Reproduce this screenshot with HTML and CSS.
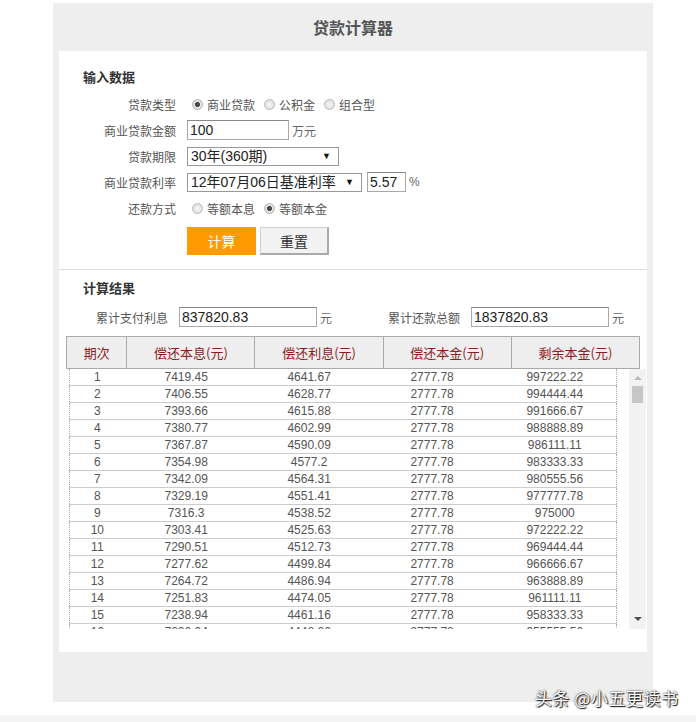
FILE: index.html
```html
<!DOCTYPE html>
<html lang="zh-CN">
<head>
  <meta charset="UTF-8" />
  <meta name="viewport" content="width=device-width, initial-scale=1.0"/>
  <title>贷款计算器</title>
  <link rel="stylesheet" href="styles.css">
</head>
<body>

<div class="page">
  <div class="calc">
    <h2 class="calc-title">贷款计算器</h2>
    <div class="calc-body">

      <div class="input-section">
        <h3 class="section-title">输入数据</h3>

        <div class="form-row">
          <span class="form-label">贷款类型</span>
          <div class="form-field">
            <span class="radio checked"></span><span class="radio-text">商业贷款</span>
            <span class="radio"></span><span class="radio-text">公积金</span>
            <span class="radio"></span><span class="radio-text">组合型</span>
          </div>
        </div>

        <div class="form-row">
          <span class="form-label">商业贷款金额</span>
          <div class="form-field">
            <span class="text-box amount">100</span>
            <span class="unit">万元</span>
          </div>
        </div>

        <div class="form-row">
          <span class="form-label">贷款期限</span>
          <div class="form-field">
            <span class="select-box term">30年(360期)<span class="arrow">▼</span></span>
          </div>
        </div>

        <div class="form-row">
          <span class="form-label">商业贷款利率</span>
          <div class="form-field">
            <span class="select-box rate">12年07月06日基准利率<span class="arrow">▼</span></span>
            <span class="text-box rate-value">5.57</span>
            <span class="unit">%</span>
          </div>
        </div>

        <div class="form-row">
          <span class="form-label">还款方式</span>
          <div class="form-field">
            <span class="radio"></span><span class="radio-text">等额本息</span>
            <span class="radio checked"></span><span class="radio-text">等额本金</span>
          </div>
        </div>

        <div class="button-row">
          <button class="btn-calc">计算</button>
          <button class="btn-reset">重置</button>
        </div>
      </div>

      <div class="result-section">
        <h3 class="section-title">计算结果</h3>

        <div class="summary-row">
          <span class="summary-label">累计支付利息</span>
          <span class="text-box summary-value">837820.83</span>
          <span class="unit">元</span>
          <span class="summary-label second">累计还款总额</span>
          <span class="text-box summary-value">1837820.83</span>
          <span class="unit">元</span>
        </div>

        <table class="plan-head">
          <tr>
            <th class="col-no">期次</th>
            <th>偿还本息(元)</th>
            <th>偿还利息(元)</th>
            <th>偿还本金(元)</th>
            <th>剩余本金(元)</th>
          </tr>
        </table>

        <!-- 只显示前面几期，其余在滚动区里 -->
        <div class="plan-scroll">
          <table class="plan-body">
            <tr><td class="col-no">1</td><td>7419.45</td><td>4641.67</td><td>2777.78</td><td>997222.22</td></tr>
            <tr><td class="col-no">2</td><td>7406.55</td><td>4628.77</td><td>2777.78</td><td>994444.44</td></tr>
            <tr><td class="col-no">3</td><td>7393.66</td><td>4615.88</td><td>2777.78</td><td>991666.67</td></tr>
            <tr><td class="col-no">4</td><td>7380.77</td><td>4602.99</td><td>2777.78</td><td>988888.89</td></tr>
            <tr><td class="col-no">5</td><td>7367.87</td><td>4590.09</td><td>2777.78</td><td>986111.11</td></tr>
            <tr><td class="col-no">6</td><td>7354.98</td><td>4577.2</td><td>2777.78</td><td>983333.33</td></tr>
            <tr><td class="col-no">7</td><td>7342.09</td><td>4564.31</td><td>2777.78</td><td>980555.56</td></tr>
            <tr><td class="col-no">8</td><td>7329.19</td><td>4551.41</td><td>2777.78</td><td>977777.78</td></tr>
            <tr><td class="col-no">9</td><td>7316.3</td><td>4538.52</td><td>2777.78</td><td>975000</td></tr>
            <tr><td class="col-no">10</td><td>7303.41</td><td>4525.63</td><td>2777.78</td><td>972222.22</td></tr>
            <tr><td class="col-no">11</td><td>7290.51</td><td>4512.73</td><td>2777.78</td><td>969444.44</td></tr>
            <tr><td class="col-no">12</td><td>7277.62</td><td>4499.84</td><td>2777.78</td><td>966666.67</td></tr>
            <tr><td class="col-no">13</td><td>7264.72</td><td>4486.94</td><td>2777.78</td><td>963888.89</td></tr>
            <tr><td class="col-no">14</td><td>7251.83</td><td>4474.05</td><td>2777.78</td><td>961111.11</td></tr>
            <tr><td class="col-no">15</td><td>7238.94</td><td>4461.16</td><td>2777.78</td><td>958333.33</td></tr>
            <tr><td class="col-no">16</td><td>7226.04</td><td>4448.26</td><td>2777.78</td><td>955555.56</td></tr>
          </table>
          <div class="scrollbar">
            <span class="scroll-up"></span>
            <span class="scroll-thumb"></span>
            <span class="scroll-down"></span>
          </div>
        </div>
      </div>

    </div>
  </div>

  <div class="bottom-strip"></div>
  <div class="watermark">头条 @小五更读书</div>
</div>

</body>
</html>
```

FILE: styles.css
```css
body {
  margin: 0;
  background-color: #fff;
  font-family: "Liberation Sans", "Noto Sans CJK SC", sans-serif;
  font-size: 12px;
  color: #555;
}
.page {
  position: relative;
  width: 696px;
  height: 722px;
  overflow: hidden;
}
.calc {
  margin: 3px 0 0 53px;
  width: 600px;
  box-sizing: border-box;
  padding: 0 6px 50px;
  background-color: #eee;
}
.calc-title {
  margin: 0;
  height: 48px;
  line-height: 48px;
  text-align: center;
  font-family: "Noto Sans CJK SC", sans-serif;
  font-size: 16px;
  font-weight: bold;
  color: #555;
}
.calc-body {
  height: 601px;
  background-color: #fff;
  overflow: hidden;
}
.section-title {
  margin: 0 0 0 24px;
  height: 18px;
  line-height: 18px;
  font-family: "Noto Sans CJK SC", sans-serif;
  font-size: 13px;
  font-weight: bold;
  color: #333;
}
.input-section { padding-top: 17px; }
.input-section .section-title { margin-bottom: 5px; }

.form-row {
  display: flex;
  align-items: center;
  height: 26px;
}
.form-label {
  width: 117px;
  margin-right: 11px;
  text-align: right;
  font-family: "Noto Sans CJK SC", sans-serif;
  color: #555;
}
.form-field {
  display: flex;
  align-items: center;
}
.radio {
  width: 9px;
  height: 9px;
  margin: 0 4px 0 5px;
  border: 1px solid #b8b8b8;
  border-radius: 50%;
  background: radial-gradient(circle, #f6f6f6 0, #d8d8d8 100%);
}
.radio.checked {
  background: radial-gradient(circle, #4a4a4a 0, #4a4a4a 2.2px, #e6e6e6 2.8px, #d0d0d0 100%);
}
.radio-text {
  margin-right: 4px;
  font-family: "Noto Sans CJK SC", sans-serif;
  color: #555;
}
.text-box {
  box-sizing: border-box;
  height: 20px;
  line-height: 18px;
  padding: 0 2px;
  border: 1px solid #a9a9a9;
  border-top-color: #888;
  font-size: 14px;
  color: #222;
  background-color: #fff;
}
.amount { width: 102px; }
.rate-value { width: 39px; margin-left: 5px; }
.unit {
  margin-left: 3px;
  color: #666;
}
.select-box {
  position: relative;
  box-sizing: border-box;
  height: 19px;
  line-height: 17px;
  padding: 0 3px;
  border: 1px solid #999;
  font-size: 14px;
  color: #222;
  background-color: #fff;
}
.select-box .arrow {
  position: absolute;
  right: 7px;
  top: 0;
  font-size: 9px;
  color: #111;
}
.term { width: 152px; }
.rate { width: 175px; }

.button-row {
  display: flex;
  gap: 4px;
  margin: 6px 0 0 128px;
}
.button-row button {
  width: 69px;
  height: 28px;
  margin: 0;
  padding: 0;
  font-family: "Noto Sans CJK SC", sans-serif;
  font-size: 14px;
  cursor: pointer;
}
.btn-calc {
  border: none;
  background-color: #ff9a00;
  color: #fff;
}
.btn-reset {
  border: 1px solid #d0d0d0;
  border-right: 2px solid #aaa;
  border-bottom: 2px solid #aaa;
  background-color: #f2f2f2;
  color: #333;
}

.result-section {
  margin-top: 14px;
  padding-top: 9px;
  border-top: 1px solid #ddd;
}
.summary-row {
  display: flex;
  align-items: center;
  margin: 10px 0 0 37px;
  height: 20px;
}
.summary-label {
  margin-right: 11px;
  font-family: "Noto Sans CJK SC", sans-serif;
  color: #555;
}
.summary-label.second { margin-left: 56px; }
.summary-value { width: 138px; }

.plan-head {
  margin: 9px 0 0 7px;
  width: 574px;
  height: 33px;
  border-collapse: collapse;
  table-layout: fixed;
}
.plan-head th {
  border: 1px solid #aaa;
  background-color: #eee;
  font-family: "Noto Sans CJK SC", sans-serif;
  font-size: 13px;
  font-weight: normal;
  color: #8b1c1c;
}
.col-no { width: 10%; }

.plan-scroll {
  display: flex;
  justify-content: space-between;
  margin-left: 10px;
  width: 577px;
  height: 260px;
  overflow: hidden;
}
.plan-body {
  width: 548px;
  border-collapse: collapse;
  table-layout: fixed;
  border-left: 1px dotted #aaa;
  border-right: 1px dotted #aaa;
  align-self: flex-start;
}
.plan-body td {
  height: 16px;
  padding: 0;
  line-height: 16px;
  border-bottom: 1px solid #ccc;
  text-align: center;
  color: #555;
}
.scrollbar {
  position: relative;
  width: 17px;
  height: 260px;
  background-color: #f2f2f2;
}
.scroll-up, .scroll-down {
  position: absolute;
  left: 5px;
  width: 0;
  height: 0;
  border-left: 4px solid transparent;
  border-right: 4px solid transparent;
}
.scroll-up { top: 7px; border-bottom: 4px solid #bbb; }
.scroll-down { bottom: 8px; border-top: 4px solid #505050; }
.scroll-thumb {
  position: absolute;
  left: 3px;
  top: 17px;
  width: 11px;
  height: 17px;
  background-color: #c6c6c6;
}

.bottom-strip {
  margin-top: 13px;
  height: 7px;
  background-color: #f3f3f3;
}
.watermark {
  position: absolute;
  left: 535px;
  top: 685px;
  font-family: "Noto Sans CJK SC", sans-serif;
  font-size: 17px;
  letter-spacing: 0.5px;
  color: #fff;
  text-shadow: 0 0 2px #000, 1px 1px 1px #222;
}
```
